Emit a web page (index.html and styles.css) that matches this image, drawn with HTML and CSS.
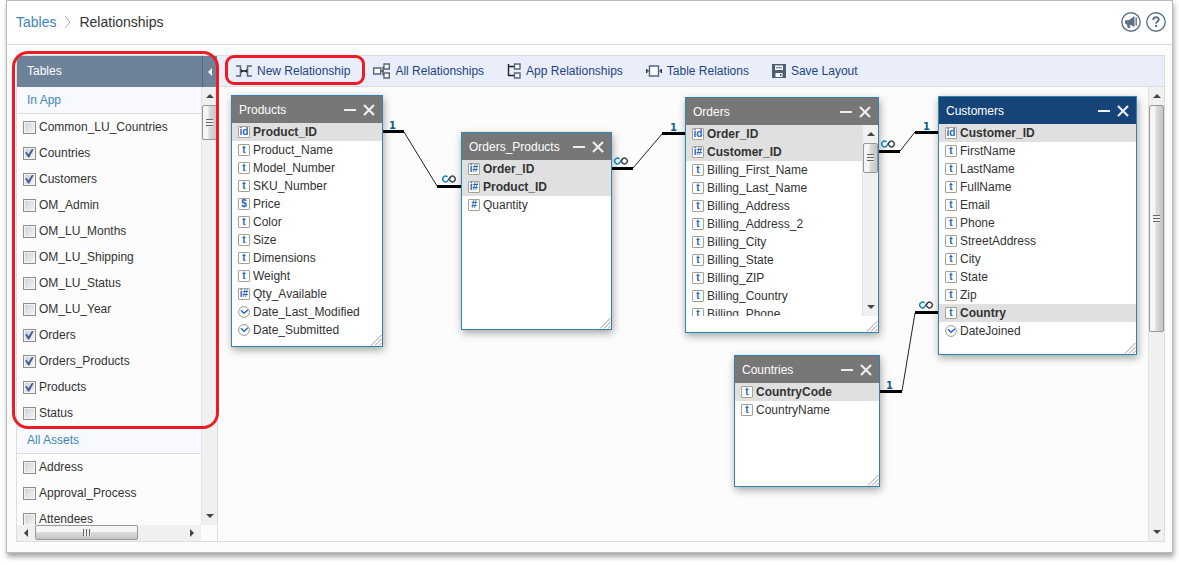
FILE: index.html
```html
<!DOCTYPE html>
<html lang="en">
<head>
    <meta charset="UTF-8">
    <meta name="viewport" content="width=device-width, initial-scale=1.0">
    <title>Relationships</title>
    <link rel="stylesheet" href="styles.css">
</head>
<body>
    <!-- Shared icons -->
    <svg class="defs" aria-hidden="true">
        <symbol id="close" viewBox="0 0 12 12"><path d="M1 1l10 10M11 1L1 11" stroke="#eee" stroke-width="2.2"/></symbol>
        <symbol id="minus" viewBox="0 0 12 12"><path d="M0 6h12" stroke="#eee" stroke-width="2"/></symbol>
        <symbol id="grip" viewBox="0 0 12 12"><path d="M1 11.500L11.500 1M5 11.500L11.500 5M9 11.500l2.500-2.500" stroke="#999" fill="none"/></symbol>
        <symbol id="clock" viewBox="0 0 12 12"><circle cx="6" cy="6" r="5.400" fill="#fff" stroke="#9d9b8c"/><path d="M3 4.200l3 3L10 3.800" fill="none" stroke="#2463bd" stroke-width="1.400"/></symbol>
        <symbol id="many" viewBox="0 0 16 8"><path d="M6.500 2A2.800 2.800 0 106.500 6L9.500 2" fill="none" stroke="#1287b5" stroke-width="1.500"/><path d="M8 4l1.500-2a2.800 2.800 0 110 4L8 4" fill="none" stroke="#444" stroke-width="1.500"/></symbol>
    </svg>

    <div class="app">
        <header class="topbar">
            <nav class="breadcrumb">
                <a href="#">Tables</a>
                <svg width="7" height="14" viewBox="0 0 7 14"><path d="M1 1l5 6-5 6" fill="none" stroke="#aaa"/></svg>
                <h1>Relationships</h1>
            </nav>
            <div class="top-actions">
                <button type="button" class="round" aria-label="Announcements">
                    <svg width="20" height="20" viewBox="0 0 20 20"><circle cx="10" cy="10" r="9.200" fill="#fff" stroke="#5d7288" stroke-width="1.400"/><path d="M4 8.500L8 8l5.500-4v11L8 12.200l-4-.4z" fill="#5d7288"/><path d="M5.500 12l1.500 4h2.500L8.500 12z" fill="#5d7288"/><path d="M15.200 5.500v8" stroke="#5d7288" stroke-width="1.400"/></svg>
                </button>
                <button type="button" class="round" aria-label="Help">
                    <svg width="20" height="20" viewBox="0 0 20 20"><circle cx="10" cy="10" r="9.200" fill="#fff" stroke="#5d7288" stroke-width="1.400"/><path d="M7.200 8c0-3.700 5.600-3.500 5.600-.4 0 2-2.700 2-2.700 4.200" fill="none" stroke="#5d7288" stroke-width="1.900"/><path d="M9 13h2.200v2H9z" fill="#5d7288"/></svg>
                </button>
            </div>
        </header>

        <div class="workspace">
            <aside class="sidebar">
                <div class="sidebar-head">
                    <h2>Tables</h2>
                    <button type="button" class="collapse" aria-label="Collapse"><span class="arrow left"></span></button>
                </div>
                <div class="sidebar-body">
                    <div class="list-column">
                        <div class="list">
                            <h3>In App</h3>
                            <label><input type="checkbox">Common_LU_Countries</label>
                            <label><input type="checkbox" checked>Countries</label>
                            <label><input type="checkbox" checked>Customers</label>
                            <label><input type="checkbox">OM_Admin</label>
                            <label><input type="checkbox">OM_LU_Months</label>
                            <label><input type="checkbox">OM_LU_Shipping</label>
                            <label><input type="checkbox">OM_LU_Status</label>
                            <label><input type="checkbox">OM_LU_Year</label>
                            <label><input type="checkbox" checked>Orders</label>
                            <label><input type="checkbox" checked>Orders_Products</label>
                            <label><input type="checkbox" checked>Products</label>
                            <label><input type="checkbox">Status</label>
                            <h3 class="divided">All Assets</h3>
                            <label><input type="checkbox">Address</label>
                            <label><input type="checkbox">Approval_Process</label>
                            <label><input type="checkbox">Attendees</label>
                        </div>
                        <div class="scroll horizontal">
                            <span class="end"><span class="arrow left"></span></span>
                            <span class="thumb"><i class="lines"></i></span>
                            <span class="end last"><span class="arrow right"></span></span>
                        </div>
                    </div>
                    <div class="scroll vertical">
                        <span class="end"><span class="arrow up"></span></span>
                        <span class="thumb short"><i class="lines"></i></span>
                        <span class="end last"><span class="arrow down"></span></span>
                    </div>
                </div>
                <div class="mark mark-sidebar"></div>
            </aside>

            <main class="designer">
                <div class="toolbar">
                    <button type="button" class="tool marked">
                        <svg width="16" height="12" viewBox="0 0 16 12"><path d="M0 1h4.500v10H0M16 1h-4.500v10H16" fill="none" stroke="#53687c" stroke-width="1.500"/><path d="M5 6h6" stroke="#222" stroke-width="1.500"/><path d="M5 4l2.500 2L5 8zM11 4L8.500 6 11 8z" fill="#222"/></svg>
                        New Relationship
                    </button>
                    <button type="button" class="tool">
                        <svg width="17" height="16" viewBox="0 0 17 16"><path d="M.700 5h7v6h-7zM11 1h5.300v5H11zM11 10h5.300v5H11z" fill="#fff" stroke="#53687c" stroke-width="1.400"/><path d="M8 8h3M10 3.500v9" stroke="#333"/></svg>
                        All Relationships
                    </button>
                    <button type="button" class="tool">
                        <svg width="14" height="16" viewBox="0 0 14 16"><path d="M1.500 1v12M1 3.500h6M1 12.500h6" stroke="#222" fill="none" stroke-width="1.400"/><path d="M7.500 1h5.500v5H7.500zM7.500 10h5.500v5H7.500z" fill="#fff" stroke="#53687c" stroke-width="1.400"/></svg>
                        App Relationships
                    </button>
                    <button type="button" class="tool">
                        <svg width="16" height="12" viewBox="0 0 16 12"><path d="M0 6h16" stroke="#333"/><path d="M.700 4v4M15.300 4v4" stroke="#333" stroke-width="1.400"/><path d="M3.500 1h9v10h-9z" fill="#fff" stroke="#53687c" stroke-width="1.400"/></svg>
                        Table Relations
                    </button>
                    <button type="button" class="tool">
                        <svg width="14" height="14" viewBox="0 0 14 14"><path d="M0 0h14v14H0z" fill="#4c6076"/><path d="M3 1.500h8v4.500H3z" fill="#fff"/><path d="M4 3.200h6v1H4zM2.500 9.500h9V13h-9z" fill="#4c6076"/><path d="M3.500 9h7v4h-7z" fill="#fff"/><path d="M8 10h1.500v2H8z" fill="#4c6076"/></svg>
                        Save Layout
                    </button>
                </div>

                <div class="stage">
                    <div class="canvas">
                        <section class="entity products">
                            <header><h2>Products</h2><button type="button" aria-label="Minimize"><svg><use href="#minus"/></svg></button><button type="button" aria-label="Close"><svg><use href="#close"/></svg></button></header>
                            <ul>
                                <li class="key"><b class="type">id</b>Product_ID</li>
                                <li><b class="type">t</b>Product_Name</li>
                                <li><b class="type">t</b>Model_Number</li>
                                <li><b class="type">t</b>SKU_Number</li>
                                <li><b class="type">$</b>Price</li>
                                <li><b class="type">t</b>Color</li>
                                <li><b class="type">t</b>Size</li>
                                <li><b class="type">t</b>Dimensions</li>
                                <li><b class="type">t</b>Weight</li>
                                <li><b class="type">i#</b>Qty_Available</li>
                                <li><svg class="clock"><use href="#clock"/></svg>Date_Last_Modified</li>
                                <li><svg class="clock"><use href="#clock"/></svg>Date_Submitted</li>
                            </ul>
                            <svg class="grip"><use href="#grip"/></svg>
                        </section>

                        <section class="entity orders-products">
                            <header><h2>Orders_Products</h2><button type="button" aria-label="Minimize"><svg><use href="#minus"/></svg></button><button type="button" aria-label="Close"><svg><use href="#close"/></svg></button></header>
                            <ul>
                                <li class="key"><b class="type">i#</b>Order_ID</li>
                                <li class="key"><b class="type">i#</b>Product_ID</li>
                                <li><b class="type">#</b>Quantity</li>
                            </ul>
                            <svg class="grip"><use href="#grip"/></svg>
                        </section>

                        <section class="entity orders">
                            <header><h2>Orders</h2><button type="button" aria-label="Minimize"><svg><use href="#minus"/></svg></button><button type="button" aria-label="Close"><svg><use href="#close"/></svg></button></header>
                            <div class="entity-scroll">
                                <ul>
                                    <li class="key"><b class="type">id</b>Order_ID</li>
                                    <li class="key"><b class="type">i#</b>Customer_ID</li>
                                    <li><b class="type">t</b>Billing_First_Name</li>
                                    <li><b class="type">t</b>Billing_Last_Name</li>
                                    <li><b class="type">t</b>Billing_Address</li>
                                    <li><b class="type">t</b>Billing_Address_2</li>
                                    <li><b class="type">t</b>Billing_City</li>
                                    <li><b class="type">t</b>Billing_State</li>
                                    <li><b class="type">t</b>Billing_ZIP</li>
                                    <li><b class="type">t</b>Billing_Country</li>
                                    <li><b class="type">t</b>Billing_Phone</li>
                                </ul>
                                <div class="scroll vertical">
                                    <span class="end"><span class="arrow up"></span></span>
                                    <span class="thumb short"><i class="lines"></i></span>
                                    <span class="end last"><span class="arrow down"></span></span>
                                </div>
                            </div>
                            <svg class="grip"><use href="#grip"/></svg>
                        </section>

                        <section class="entity customers active">
                            <header><h2>Customers</h2><button type="button" aria-label="Minimize"><svg><use href="#minus"/></svg></button><button type="button" aria-label="Close"><svg><use href="#close"/></svg></button></header>
                            <ul>
                                <li class="key"><b class="type">id</b>Customer_ID</li>
                                <li><b class="type">t</b>FirstName</li>
                                <li><b class="type">t</b>LastName</li>
                                <li><b class="type">t</b>FullName</li>
                                <li><b class="type">t</b>Email</li>
                                <li><b class="type">t</b>Phone</li>
                                <li><b class="type">t</b>StreetAddress</li>
                                <li><b class="type">t</b>City</li>
                                <li><b class="type">t</b>State</li>
                                <li><b class="type">t</b>Zip</li>
                                <li class="key"><b class="type">t</b>Country</li>
                                <li><svg class="clock"><use href="#clock"/></svg>DateJoined</li>
                            </ul>
                            <svg class="grip"><use href="#grip"/></svg>
                        </section>

                        <section class="entity countries">
                            <header><h2>Countries</h2><button type="button" aria-label="Minimize"><svg><use href="#minus"/></svg></button><button type="button" aria-label="Close"><svg><use href="#close"/></svg></button></header>
                            <ul>
                                <li class="key"><b class="type">t</b>CountryCode</li>
                                <li><b class="type">t</b>CountryName</li>
                            </ul>
                            <svg class="grip"><use href="#grip"/></svg>
                        </section>

                        <!-- Connectors between the tables -->
                        <svg class="links">
                            <g class="slope">
                                <path d="M186 45l33 54"/>
                                <path d="M415 81l29-34"/>
                                <path d="M682 64l15-19"/>
                                <path d="M684 304l13-78"/>
                            </g>
                            <g class="stub">
                                <path d="M165 44.500h21M219 99.500h24"/>
                                <path d="M394 81.500h21M444 46.500h23"/>
                                <path d="M661 64.500h21M697 45.500h23"/>
                                <path d="M662 304.500h22M697 225.500h23"/>
                            </g>
                            <text x="171" y="42">1</text>
                            <text x="452" y="44">1</text>
                            <text x="705" y="43">1</text>
                            <text x="668" y="302">1</text>
                            <use href="#many" x="223" y="88" width="16" height="8"/>
                            <use href="#many" x="395" y="70" width="16" height="8"/>
                            <use href="#many" x="662" y="53" width="16" height="8"/>
                            <use href="#many" x="700" y="214" width="16" height="8"/>
                        </svg>
                    </div>
                    <div class="scroll vertical">
                        <span class="end"><span class="arrow up"></span></span>
                        <span class="thumb"><i class="lines"></i></span>
                        <span class="end last"><span class="arrow down"></span></span>
                    </div>
                </div>
            </main>
        </div>
    </div>
</body>
</html>
```
FILE: styles.css
```css
* {
    margin: 0;
    padding: 0;
    box-sizing: border-box;
}
body {
    font-family: "Liberation Sans", Arial, sans-serif;
    font-size: 12px;
    color: #333;
    background: #fff;
}
button {
    font: inherit;
    border: none;
    background: none;
    cursor: pointer;
}
h1, h2, h3 {
    font-size: 12px;
    font-weight: normal;
}
.defs {
    position: absolute;
    width: 0;
    height: 0;
}
.app {
    display: flex;
    flex-direction: column;
    height: calc(100vh - 12px);
    min-height: 400px;
    margin: 0 6px 12px;
    background: #fcfcfc;
    border: 1px solid #bbb;
    box-shadow: 1px 4px 5px rgba(0, 0, 0, 0.35);
}

/* Top bar */
.topbar {
    display: flex;
    justify-content: space-between;
    align-items: center;
    height: 44px;
    padding: 0 6px 2px 9px;
    background: #fff;
    border-bottom: 1px solid #ddd;
}
.breadcrumb {
    display: flex;
    align-items: center;
    gap: 8px;
    font-size: 14px;
}
.breadcrumb a {
    color: #3f87b5;
    text-decoration: none;
}
.breadcrumb h1 {
    font-size: 14px;
}
.top-actions {
    display: flex;
    gap: 5px;
}
.round svg {
    display: block;
}

/* Workspace */
.workspace {
    display: flex;
    flex: 1;
    min-height: 0;
    margin: 10px 7px 10px 9px;
    border: 1px solid #ddd;
}
.sidebar {
    position: relative;
    display: flex;
    flex-direction: column;
    flex: none;
    width: 201px;
    border-right: 1px solid #ddd;
}
.sidebar-head {
    display: flex;
    height: 31px;
    color: #fff;
    background: #6e8299;
}
.sidebar-head h2 {
    flex: 1;
    padding-left: 10px;
    line-height: 30px;
}
.collapse {
    display: flex;
    align-items: center;
    justify-content: center;
    width: 15px;
    border-left: 1px solid #52657a;
    color: #fff;
}
.sidebar-body {
    display: flex;
    flex: 1;
    min-height: 0;
}
.sidebar-body > .vertical {
    margin-bottom: 16px;
}
.list-column {
    display: flex;
    flex-direction: column;
    flex: 1;
}
.list {
    flex: 1;
    min-height: 0;
    overflow: hidden;
}
.list h3 {
    height: 27px;
    padding-left: 10px;
    line-height: 26px;
    color: #3f87b5;
    background: #f7f9fe;
    border-bottom: 1px solid #ddd;
}
.list h3.divided {
    height: 28px;
    border-top: 1px solid #ddd;
}
.list label {
    display: flex;
    align-items: center;
    gap: 3px;
    height: 26px;
    padding-left: 6px;
}
.list input {
    appearance: none;
    width: 13px;
    height: 13px;
    border: 1px solid #8e8f8f;
    background: linear-gradient(135deg, #cbcfd5, #f6f6f6);
    box-shadow: inset 0 0 0 1px #f4f4f4;
}
.list input:checked::before {
    content: "";
    display: block;
    width: 9px;
    height: 9px;
    margin: 1px;
    background: #4a5f97;
    clip-path: polygon(0 45%, 22% 40%, 38% 65%, 80% 0, 100% 0, 48% 100%, 34% 100%);
}

/* Scrollbars */
.scroll {
    display: flex;
    flex: none;
    background: #f0f0f0;
}
.vertical {
    flex-direction: column;
    width: 16px;
    border-left: 1px solid #e4e4e4;
}
.horizontal {
    height: 16px;
}
.end {
    display: flex;
    flex: none;
    align-items: center;
    justify-content: center;
    width: 18px;
    height: 16px;
    color: #444;
}
.vertical .end {
    width: 15px;
    height: 18px;
}
.horizontal .last {
    margin-left: auto;
}
.vertical .last {
    margin-top: auto;
}
.thumb {
    display: flex;
    flex: none;
    align-items: center;
    justify-content: center;
    width: 103px;
    height: 15px;
    border: 1px solid #979797;
    border-radius: 2px;
    background: linear-gradient(#f5f5f5 0 45%, #dadadc 50%, #c6c6c9);
}
.vertical .thumb {
    width: 15px;
    height: 50%;
    background: linear-gradient(90deg, #f5f5f5 0 35%, #dadadc 50%, #c6c6c9);
}
.vertical .thumb.short {
    height: 35px;
}
.entity .vertical .thumb.short {
    height: 30px;
}
.lines {
    width: 8px;
    height: 7px;
    background: repeating-linear-gradient(90deg, #666 0 1px, #eee 1px 3px);
}
.vertical .lines {
    width: 7px;
    height: 8px;
    background: repeating-linear-gradient(#666 0 1px, #eee 1px 3px);
}
.arrow {
    border: 4px solid transparent;
}
.arrow.left {
    border-left-width: 0;
    border-right-color: currentColor;
}
.arrow.right {
    border-right-width: 0;
    border-left-color: currentColor;
}
.arrow.up {
    border-top-width: 0;
    border-bottom-color: currentColor;
}
.arrow.down {
    border-bottom-width: 0;
    border-top-color: currentColor;
}

/* Toolbar */
.designer {
    display: flex;
    flex-direction: column;
    flex: 1;
    min-width: 0;
}
.toolbar {
    display: flex;
    gap: 23px;
    height: 31px;
    padding-left: 18px;
    background: #e9eefa;
    border-bottom: 1px solid #ddd;
}
.tool {
    position: relative;
    display: flex;
    align-items: center;
    gap: 5px;
    color: #1c4583;
    white-space: nowrap;
}

/* Red outlines over the page */
.mark,
.marked::after {
    position: absolute;
    border: 3px solid #ed1c24;
    pointer-events: none;
}
.mark-sidebar {
    z-index: 2;
    top: -5px;
    left: -5px;
    width: 207px;
    height: 378px;
    border-radius: 16px;
}
.marked::after {
    content: "";
    inset: -1px -15px 1px -11px;
    border-radius: 9px;
}

/* Canvas with the table windows */
.stage {
    display: flex;
    flex: 1;
    min-height: 0;
}
.canvas {
    position: relative;
    flex: 1;
    overflow: hidden;
}
.entity {
    position: absolute;
    background: #fff;
    border: 1px solid #2f83ae;
    box-shadow: 1px 3px 8px rgba(0, 0, 0, 0.35);
}
.products {
    left: 13px;
    top: 8px;
    width: 152px;
    height: 252px;
}
.orders-products {
    left: 243px;
    top: 45px;
    width: 151px;
    height: 198px;
}
.orders {
    left: 467px;
    top: 10px;
    width: 194px;
    height: 236px;
}
.customers {
    left: 720px;
    top: 9px;
    width: 199px;
    height: 259px;
}
.countries {
    left: 516px;
    top: 268px;
    width: 146px;
    height: 132px;
}
.entity header {
    display: flex;
    align-items: center;
    gap: 7px;
    height: 27px;
    padding: 0 7px;
    color: #fff;
    background: #777;
}
.entity.active header {
    background: #174478;
}
.entity h2 {
    flex: 1;
}
.entity header svg {
    display: block;
    width: 12px;
    height: 12px;
}
.entity ul {
    flex: 1;
    list-style: none;
}
.entity li {
    display: flex;
    align-items: center;
    gap: 3px;
    height: 18px;
    padding-left: 6px;
}
.entity li.key {
    font-weight: bold;
    background: #e0e0e0;
}
.type {
    display: flex;
    justify-content: center;
    width: 12px;
    height: 12px;
    border: 1px solid #a5a394;
    border-radius: 1px;
    background: #fff;
    color: #2463bd;
    font-size: 10px;
    line-height: 10px;
}
.clock {
    width: 12px;
    height: 12px;
}
.entity-scroll {
    display: flex;
    height: 191px;
    overflow: hidden;
}
.grip {
    position: absolute;
    right: 0;
    bottom: 0;
    width: 12px;
    height: 12px;
}
.links {
    position: absolute;
    inset: 0;
    width: 100%;
    height: 100%;
    pointer-events: none;
}
.links .slope {
    fill: none;
    stroke: #222;
}
.links .stub {
    fill: none;
    stroke: #000;
    stroke-width: 3px;
}
.links text {
    font-family: "DejaVu Sans", sans-serif;
    font-size: 10px;
    font-weight: bold;
    fill: #0d5e86;
}
```
